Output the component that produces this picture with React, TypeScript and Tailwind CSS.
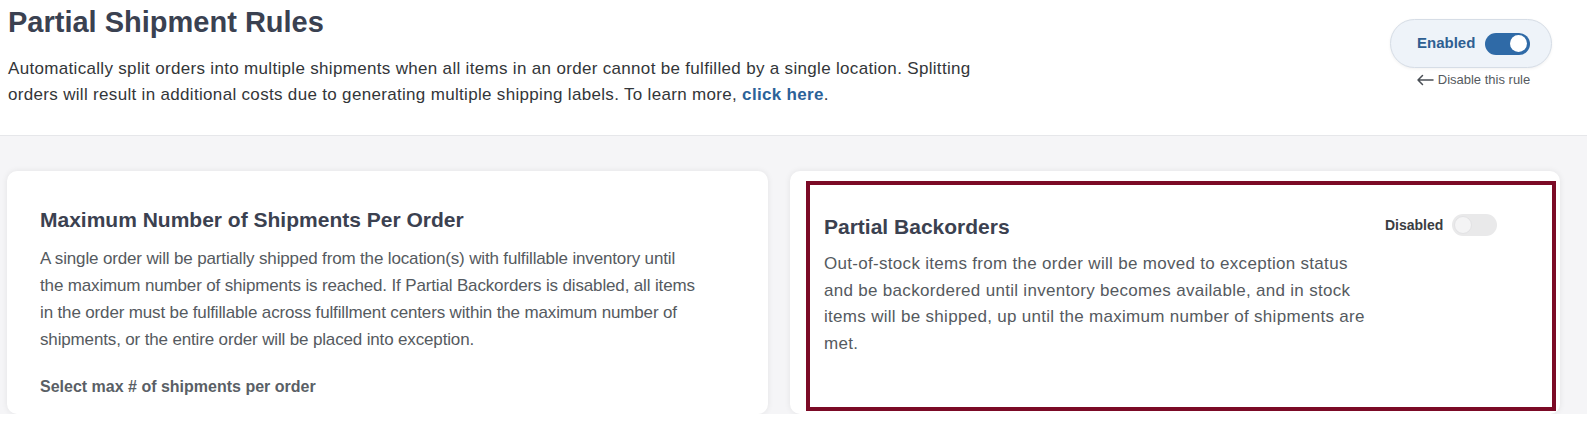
import React from 'react';

/**
 * Partial shipment settings: page header with the rule switch, then two
 * rule cards. The right card carries a red review frame over it.
 */
function Toggle({ on }: { on: boolean }) {
  return on ? (
    <div className="w-[45px] h-[22px] rounded-full bg-[#2f6aa7] flex items-center justify-end px-[3px]">
      <div className="w-[17px] h-[17px] rounded-full bg-white" />
    </div>
  ) : (
    <div className="w-[45px] h-[22px] rounded-full bg-[#e9e9ea] flex items-center px-[2px]">
      <div className="w-[18px] h-[18px] rounded-full bg-[#f4f4f5] border border-[#e2e2e4]" />
    </div>
  );
}

export default function App() {
  return (
    <div className="w-[1587px] h-[427px] overflow-hidden bg-white font-['Liberation_Sans',Arial,sans-serif]">
      {/* Header */}
      <header className="h-[136px] border-b border-[#e6e7ea] flex justify-between pl-[8px] pr-[35px]">
        <div className="pt-[4px]">
          <h1 className="text-[29px] leading-[36px] font-bold text-[#3a4151]">Partial Shipment Rules</h1>
          <p className="mt-[16px] w-[1000px] text-[17px] leading-[26px] tracking-[0.32px] text-[#333639]">
            Automatically split orders into multiple shipments when all items in an order cannot be fulfilled by a single location. Splitting orders will result in additional costs due to generating multiple shipping labels. To learn more,{' '}
            <a className="font-bold text-[#2b6299]">click here</a>.
          </p>
        </div>
        <div className="pt-[19px] flex flex-col items-center">
          <div className="h-[49px] w-[162px] rounded-full bg-[#eef3f9] border border-[#d6dde6] shadow-[0_1px_3px_rgba(0,0,0,0.06)] flex items-center pl-[26px] gap-[10px]">
            <span className="text-[15px] font-bold text-[#2e5f92]">Enabled</span>
            <Toggle on />
          </div>
          <div className="mt-[2px] ml-[4px] flex items-center gap-[4px] text-[13px] text-[#555a60]">
            <svg width="18" height="12" viewBox="0 0 18 12" fill="none" stroke="#4a4f55" strokeWidth="1.5" strokeLinecap="round" strokeLinejoin="round">
              <path d="M17 6H2M6.5 1.5L2 6l4.5 4.5" />
            </svg>
            <span>Disable this rule</span>
          </div>
        </div>
      </header>

      {/* Rule cards */}
      <main className="h-[278px] bg-[#f5f5f7] pt-[35px] pl-[7px] pr-[27px] flex items-start gap-[22px] overflow-hidden">
        <section className="w-[761px] h-[243px] shrink-0 bg-white rounded-[10px] shadow-[0_0_6px_rgba(0,0,0,0.08)] pt-[35px] px-[33px]">
          <h2 className="text-[21px] leading-[28px] font-bold text-[#3b4150]">Maximum Number of Shipments Per Order</h2>
          <p className="mt-[11px] text-[17px] leading-[27px] tracking-[-0.15px] text-[#555a60] whitespace-nowrap">
            A single order will be partially shipped from the location(s) with fulfillable inventory until
            <br />
            the maximum number of shipments is reached. If Partial Backorders is disabled, all items
            <br />
            in the order must be fulfillable across fulfillment centers within the maximum number of
            <br />
            shipments, or the entire order will be placed into exception.
          </p>
          <p className="mt-[22px] text-[16px] leading-[24px] font-bold text-[#5a5f66]">Select max # of shipments per order</p>
        </section>

        <section className="relative flex-1 h-[243px] bg-white rounded-[10px] shadow-[0_0_6px_rgba(0,0,0,0.08)] pt-[42px] px-[34px]">
          <div className="flex">
            <div className="w-[561px]">
              <h2 className="text-[21px] leading-[28px] font-bold text-[#3b4150]">Partial Backorders</h2>
              <p className="mt-[10px] text-[17px] leading-[26.5px] tracking-[0.3px] text-[#555a60] whitespace-nowrap">
                Out-of-stock items from the order will be moved to exception status
                <br />
                and be backordered until inventory becomes available, and in stock
                <br />
                items will be shipped, up until the maximum number of shipments are
                <br />
                met.
              </p>
            </div>
            <div className="h-[28px] flex items-center gap-[9px] -mt-[2px]">
              <span className="text-[14px] font-bold text-[#3a3d42]">Disabled</span>
              <Toggle on={false} />
            </div>
          </div>
          {/* review frame */}
          <div className="absolute left-[16px] top-[10px] right-[4px] bottom-[3px] border-4 border-[#7b0a26] pointer-events-none" />
        </section>
      </main>
    </div>
  );
}
